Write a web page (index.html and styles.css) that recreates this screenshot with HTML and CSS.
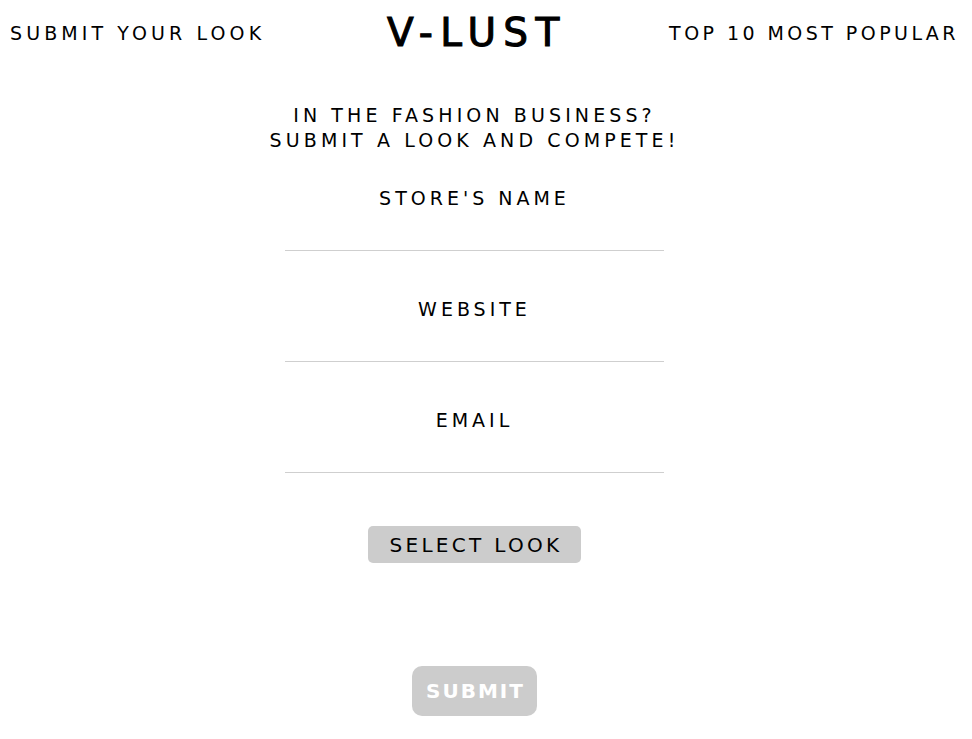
FILE: index.html
```html
<!DOCTYPE html>
<html lang="en">
<head>
<meta charset="utf-8">
<title>V-LUST</title>
<link rel="stylesheet" href="styles.css">
</head>
<body>
<header class="topbar">
  <a class="nav-link nav-left" href="#">SUBMIT YOUR LOOK</a>
  <div class="logo">V-LUST</div>
  <a class="nav-link nav-right" href="#">TOP 10 MOST POPULAR</a>
</header>
<main class="page">
  <h1 class="intro">IN THE FASHION BUSINESS?<br>SUBMIT A LOOK AND COMPETE!</h1>
  <form class="form">
    <label class="field">
      <span class="field-label">STORE'S NAME</span>
      <input class="field-input" type="text">
    </label>
    <label class="field">
      <span class="field-label">WEBSITE</span>
      <input class="field-input" type="text">
    </label>
    <label class="field">
      <span class="field-label">EMAIL</span>
      <input class="field-input" type="email">
    </label>
    <button type="button" class="select-btn">SELECT LOOK</button>
    <button type="button" class="submit-btn">SUBMIT</button>
  </form>
</main>
</body>
</html>
```
FILE: styles.css
```css
* { box-sizing: border-box; }
html, body { margin: 0; padding: 0; background: #fff; }
body {
  font-family: "DejaVu Sans", sans-serif;
  color: #000;
  width: 972px;
}
.topbar {
  display: flex;
  justify-content: space-between;
  align-items: center;
  height: 66px;
  padding: 0 13px 0 10px;
}
.nav-link {
  font-size: 19px;
  line-height: 25px;
  color: #000;
  text-decoration: none;
  font-weight: 400;
}
.nav-left { letter-spacing: 4.1px; margin-right: 12px; }
.nav-right { letter-spacing: 3.45px; }
.logo {
  font-size: 39px;
  line-height: 44px;
  letter-spacing: 7.4px;
  margin-right: -7.4px;
  font-weight: 400;
  -webkit-text-stroke: 1.1px #000;
}
.page {
  width: 949px;
  display: flex;
  flex-direction: column;
  align-items: center;
}
.intro {
  margin: 37px 0 0;
  font-size: 19px;
  line-height: 25px;
  font-weight: 400;
  letter-spacing: 4.1px;
  text-align: center;
}
.form {
  display: flex;
  flex-direction: column;
  align-items: center;
  margin-top: 33px;
}
.field {
  display: flex;
  flex-direction: column;
  align-items: center;
  width: 379px;
  margin-bottom: 46px;
}
.field-label {
  font-size: 19px;
  line-height: 25px;
  letter-spacing: 4px;
}
.field-input {
  width: 100%;
  height: 40px;
  border: 0;
  border-bottom: 1px solid #cfcfcf;
  outline: none;
  background: transparent;
}
.select-btn {
  margin-top: 7px;
  width: 213px;
  height: 37px;
  border: 0;
  border-radius: 5px;
  background: #cccccc;
  color: #000;
  font-family: "DejaVu Sans", sans-serif;
  font-size: 20px;
  letter-spacing: 3.3px;
  padding: 0 0 0 3px;
}
.submit-btn {
  margin-top: 103px;
  width: 125px;
  height: 50px;
  border: 0;
  border-radius: 10px;
  background: #cccccc;
  color: #fff;
  font-family: "DejaVu Sans", sans-serif;
  font-weight: 700;
  font-size: 20px;
  letter-spacing: 2px;
  padding: 0 0 0 2px;
}
```
